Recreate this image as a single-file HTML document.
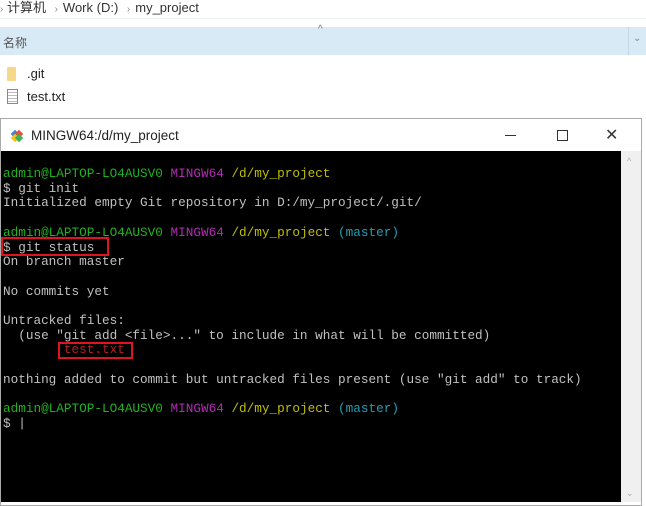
<!DOCTYPE html>
<html><head><meta charset="utf-8">
<style>
*{margin:0;padding:0;box-sizing:border-box}
body{width:646px;height:506px;background:#fff;position:relative;overflow:hidden;font-family:"Liberation Sans","Noto Sans CJK SC",sans-serif;color:#222}
.a{position:absolute}
.term{position:absolute;left:1px;top:151px;width:620px;height:351px;background:#000;font-family:"Liberation Mono",monospace;font-size:12.7px;color:#c0c0c0;line-height:14.7px;padding:16px 0 0 2px;white-space:pre}
.g{color:#1fb31f}.m{color:#b42cb4}.y{color:#bfbf00}.c{color:#1fa0b4}.r{color:#b41f1f}
</style></head><body>
<div class="a" style="left:0;top:0;font-size:13px;line-height:16px;color:#333">
<span style="color:#888;font-size:10px">›</span> 计算机 <span style="color:#888;font-size:10px;margin:0 5px">›</span>Work (D:) <span style="color:#888;font-size:10px;margin:0 5px">›</span>my_project</div>
<div class="a" style="left:0;top:18px;width:646px;height:1px;background:#eee"></div>
<div class="a" style="left:0;top:27px;width:646px;height:28px;background:#d9eaf7"></div>
<div class="a" style="left:3px;top:34px;font-size:12px;color:#555">名称</div>
<div class="a" style="left:318px;top:24px;font-size:10px;color:#777">^</div>
<div class="a" style="left:628px;top:27px;width:1px;height:28px;background:#c5d8e8"></div>
<div class="a" style="left:633px;top:33px;font-size:10px;color:#888">⌄</div>
<div class="a" style="left:7px;top:67px;width:9px;height:14px;background:#f5d88a;border-radius:1px"></div>
<div class="a" style="left:27px;top:66px;font-size:13px">.git</div>
<div class="a" style="left:7px;top:89px;width:11px;height:15px;border:1px solid #888;background:repeating-linear-gradient(#fff 0 2px,#bbb 2px 3px)"></div>
<div class="a" style="left:27px;top:89px;font-size:13px">test.txt</div>
<div class="a" style="left:0;top:118px;width:642px;height:388px;border:1px solid #aaa;background:#fff"></div>
<svg class="a" style="left:9px;top:128px" width="16" height="16" viewBox="0 0 16 16">
<rect x="3" y="3" width="6" height="6" fill="#3b82d8" transform="rotate(45 6 6)"/>
<rect x="7" y="3" width="6" height="6" fill="#e94f3b" transform="rotate(45 10 6)"/>
<rect x="3" y="7" width="6" height="6" fill="#f4c21c" transform="rotate(45 6 10)"/>
<rect x="7" y="7" width="6" height="6" fill="#3cb35a" transform="rotate(45 10 10)"/>
</svg>
<div class="a" style="left:31px;top:128px;font-size:13.5px;color:#222">MINGW64:/d/my_project</div>
<div class="a" style="left:505px;top:135px;width:11px;height:1px;background:#333"></div>
<div class="a" style="left:557px;top:130px;width:11px;height:11px;border:1px solid #333"></div>
<div class="a" style="left:605px;top:125px;font-size:16px;color:#333">✕</div>
<div class="a" style="left:621px;top:151px;width:20px;height:351px;background:#f0f0f0"></div>
<div class="a" style="left:627px;top:156px;font-size:9px;color:#aaa">^</div>
<div class="a" style="left:626px;top:488px;font-size:9px;color:#aaa">⌄</div>
<div class="term"><span class="g">admin@LAPTOP-LO4AUSV0</span> <span class="m">MINGW64</span> <span class="y">/d/my_project</span>
$ git init
Initialized empty Git repository in D:/my_project/.git/

<span class="g">admin@LAPTOP-LO4AUSV0</span> <span class="m">MINGW64</span> <span class="y">/d/my_project</span> <span class="c">(master)</span>
$ git status
On branch master

No commits yet

Untracked files:
  (use "git add &lt;file&gt;..." to include in what will be committed)
        <span class="r">test.txt</span>

nothing added to commit but untracked files present (use "git add" to track)

<span class="g">admin@LAPTOP-LO4AUSV0</span> <span class="m">MINGW64</span> <span class="y">/d/my_project</span> <span class="c">(master)</span>
$ |</div>
<div class="a" style="left:1px;top:237px;width:108px;height:19px;border:2px solid #e0141e"></div>
<div class="a" style="left:58px;top:342px;width:75px;height:17px;border:2px solid #e0141e"></div>
</body></html>
